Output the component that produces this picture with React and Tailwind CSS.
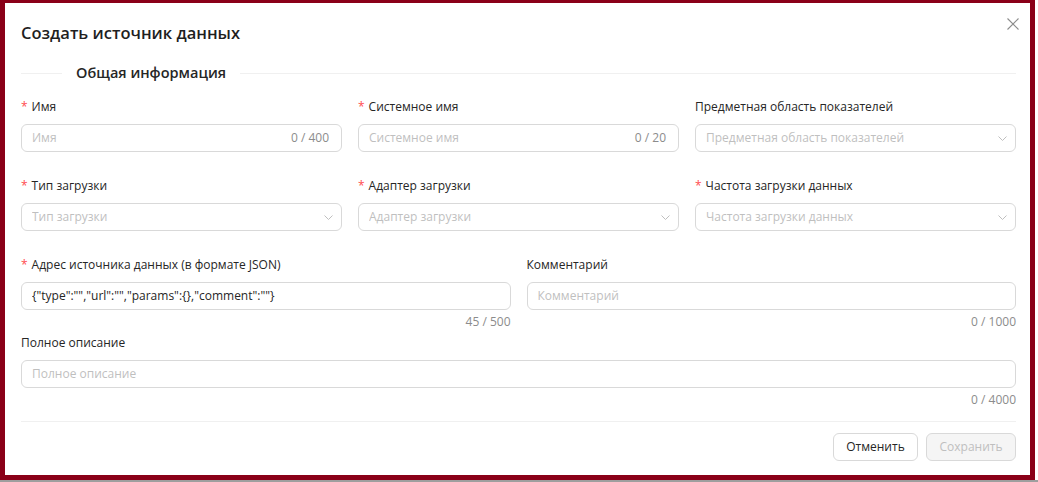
import React from 'react';

const font = { fontFamily: '"Open Sans", "Noto Sans", Arial, sans-serif' };

const Chevron = () => (
  <svg width="9" height="5" viewBox="0 0 9 5" fill="none" className="shrink-0">
    <polyline points="0.5,0.5 4.5,4.5 8.5,0.5" stroke="#bfbfbf" strokeWidth="1" />
  </svg>
);

const CloseIcon = () => (
  <svg width="12" height="12" viewBox="0 0 12 12" fill="none">
    <path d="M0.5 0.5 L11.5 11.5 M11.5 0.5 L0.5 11.5" stroke="#8c8c8c" strokeWidth="1.1" />
  </svg>
);

const Label = ({ required, children }) => (
  <div className="h-5 flex items-center text-[12px] text-[#262626] mb-[7px] leading-5">
    {required && <span className="text-[#ff4d4f] mr-[4px] text-[12px]">*</span>}
    <span>{children}</span>
  </div>
);

const TextInput = ({ placeholder, value, count }) => (
  <div className="h-7 border border-[#d9d9d9] rounded-[6px] flex items-center pl-[10px] pr-[12px] text-[12px] bg-white">
    {value ? (
      <span className="flex-1 text-[#262626] truncate">{value}</span>
    ) : (
      <span className="flex-1 text-[#bfbfbf] truncate">{placeholder}</span>
    )}
    {count && <span className="text-[#8c8c8c] ml-2">{count}</span>}
  </div>
);

const SelectInput = ({ placeholder }) => (
  <div className="h-7 border border-[#d9d9d9] rounded-[6px] flex items-center pl-[10px] pr-[8px] text-[12px] bg-white">
    <span className="flex-1 text-[#bfbfbf] truncate">{placeholder}</span>
    <Chevron />
  </div>
);

const Counter = ({ children }) => (
  <div className="h-[23px] flex items-center justify-end text-[12px] text-[#8c8c8c]">{children}</div>
);

export default function App() {
  return (
    <div className="w-[1038px] h-[482px] bg-white overflow-hidden" style={font}>
      <div className="w-[1035px] h-[480px] border-l-[5px] border-r-[5px] border-t-[3px] border-b-[5px] border-[#8a0018] bg-white pl-4 pr-[14px] relative">
        {/* Header */}
        <div className="pt-[18px] h-[42px]">
          <h2 className="text-[16.5px] leading-6 font-semibold text-[#1f1f1f]">Создать источник данных</h2>
        </div>
        <button className="absolute right-[11px] top-[15px] flex">
          <CloseIcon />
        </button>

        {/* Section divider */}
        <div className="mt-[18px] h-5 flex items-center">
          <div className="w-[41px] h-px bg-[#f0f0f0]" />
          <span className="px-[14px] text-[14.5px] font-semibold text-[#262626]">Общая информация</span>
          <div className="flex-1 h-px bg-[#f0f0f0]" />
        </div>

        {/* Row 1 */}
        <div className="mt-[14px] grid grid-cols-3 gap-x-4">
          <div>
            <Label required>Имя</Label>
            <TextInput placeholder="Имя" count="0 / 400" />
          </div>
          <div>
            <Label required>Системное имя</Label>
            <TextInput placeholder="Системное имя" count="0 / 20" />
          </div>
          <div>
            <Label>Предметная область показателей</Label>
            <SelectInput placeholder="Предметная область показателей" />
          </div>
        </div>

        {/* Row 2 */}
        <div className="mt-6 grid grid-cols-3 gap-x-4">
          <div>
            <Label required>Тип загрузки</Label>
            <SelectInput placeholder="Тип загрузки" />
          </div>
          <div>
            <Label required>Адаптер загрузки</Label>
            <SelectInput placeholder="Адаптер загрузки" />
          </div>
          <div>
            <Label required>Частота загрузки данных</Label>
            <SelectInput placeholder="Частота загрузки данных" />
          </div>
        </div>

        {/* Row 3 */}
        <div className="mt-6 grid grid-cols-2 gap-x-4">
          <div>
            <Label required>Адрес источника данных (в формате JSON)</Label>
            <TextInput value={'{"type":"","url":"","params":{},"comment":""}'} />
            <Counter>45 / 500</Counter>
          </div>
          <div>
            <Label>Комментарий</Label>
            <TextInput placeholder="Комментарий" />
            <Counter>0 / 1000</Counter>
          </div>
        </div>

        {/* Row 4 */}
        <div>
          <Label>Полное описание</Label>
          <TextInput placeholder="Полное описание" />
          <Counter>0 / 4000</Counter>
        </div>

        {/* Footer */}
        <div className="mt-[10px] h-px bg-[#f0f0f0]" />
        <div className="mt-[11px] flex justify-end gap-2">
          <button className="h-7 w-[85px] border border-[#d9d9d9] rounded-[6px] bg-white text-[12px] text-[#262626]">
            Отменить
          </button>
          <button className="h-7 w-[90px] border border-[#d9d9d9] rounded-[6px] bg-[#f5f5f5] text-[12px] text-[#bfbfbf]">
            Сохранить
          </button>
        </div>
      </div>
      <div className="h-[2px] bg-[#9e9e9e]" />
    </div>
  );
}
